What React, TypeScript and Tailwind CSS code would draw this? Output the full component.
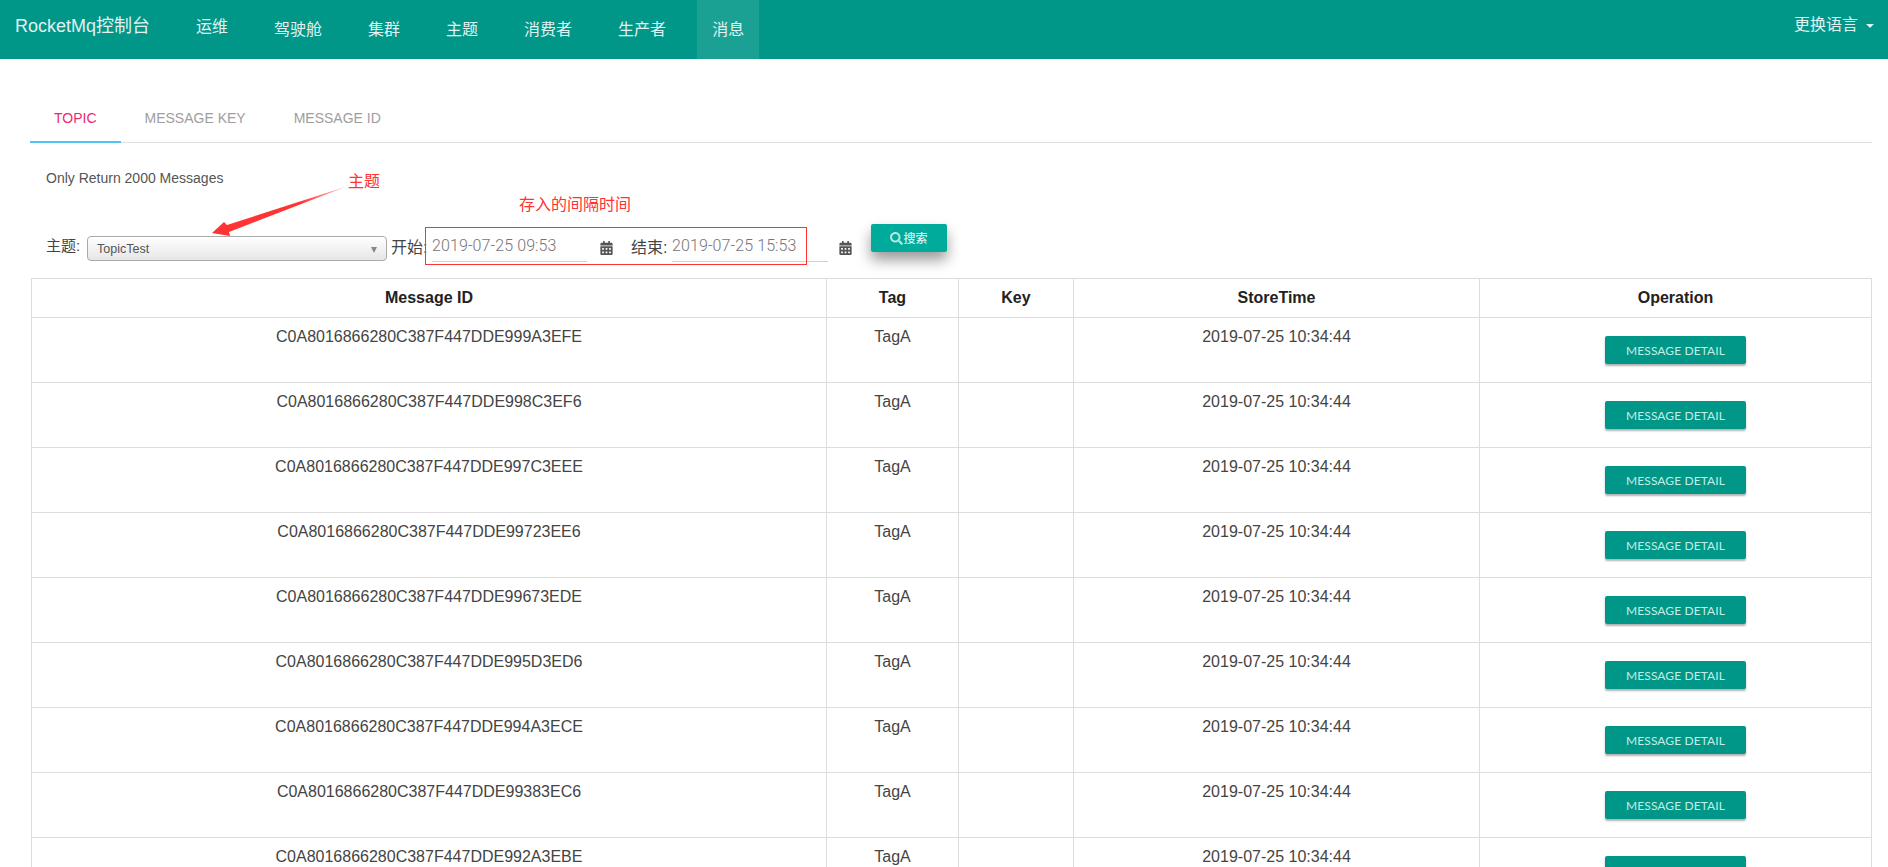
import { FaCalendarAlt, FaSearch } from "react-icons/fa";

const cjk = "font-['Liberation_Sans','Noto_Sans_CJK_SC',sans-serif]";

const navItems = ["驾驶舱", "集群", "主题", "消费者", "生产者"];

const rows = [
  "C0A8016866280C387F447DDE999A3EFE",
  "C0A8016866280C387F447DDE998C3EF6",
  "C0A8016866280C387F447DDE997C3EEE",
  "C0A8016866280C387F447DDE99723EE6",
  "C0A8016866280C387F447DDE99673EDE",
  "C0A8016866280C387F447DDE995D3ED6",
  "C0A8016866280C387F447DDE994A3ECE",
  "C0A8016866280C387F447DDE99383EC6",
  "C0A8016866280C387F447DDE992A3EBE",
];

function DateField({ value, width }: { value: string; width: string }) {
  return (
    <div className={`${width} mt-[2px] h-[36px] pt-[8px] border-b border-[#d0d0d0] font-['Roboto',sans-serif] font-light text-[16px] leading-[24px] text-[#757575] tracking-[0.1px] whitespace-nowrap`}>
      {value}
    </div>
  );
}

export default function App() {
  return (
    <div className={`relative h-screen overflow-hidden bg-white ${cjk}`}>
      {/* Top bar */}
      <nav className="flex h-[59px] bg-[#009688] text-[#e0f2f1]">
        <div className="pl-[15px] pr-[31px] pb-[6px] flex items-center text-[18px]">RocketMq控制台</div>
        <div className="flex gap-[16px]">
          <div className="px-[15px] pb-[6px] flex items-center text-[16px]">运维</div>
          {navItems.map((item) => (
            <div key={item} className="px-[15px] flex items-center text-[16px]">
              {item}
            </div>
          ))}
          <div className="px-[15px] flex items-center text-[16px] bg-white/10">消息</div>
        </div>
        <div className="ml-auto pr-[14px] pb-[10px] flex items-center text-[16px]">
          更换语言
          <span className="ml-[8px] mt-[2px] w-0 h-0 border-x-[4px] border-x-transparent border-t-[4px] border-t-[#e0f2f1]" />
        </div>
      </nav>

      {/* Tabs */}
      <div className="ml-[30px] mr-[16px] mt-[36px] flex h-[48px] border-b border-[#e0e0e0] text-[14px] font-['Liberation_Sans',sans-serif]">
        <div className="px-[24px] h-[48px] flex items-center justify-center border-b-2 border-[#4fc3f7] text-[#ec2a6e]">TOPIC</div>
        <div className="px-[24px] flex items-center justify-center text-[#9e9e9e]">MESSAGE KEY</div>
        <div className="px-[24px] flex items-center justify-center text-[#9e9e9e]">MESSAGE ID</div>
      </div>

      <div className="ml-[46px] mt-[25px] text-[14px] leading-[20px] text-[#555]">Only Return 2000 Messages</div>

      {/* Query form */}
      <div className="ml-[46px] mt-[36px] flex items-start h-[54px] text-[#444] whitespace-nowrap">
        <span className="mt-[11px] w-[41px] text-[15px] leading-[22px]">主题:</span>
        <div className="mt-[12px] w-[300px] h-[25px] pt-[2px] flex items-center justify-between pl-[9px] pr-[9px] rounded-[4px] border border-[#aaa] bg-gradient-to-b from-white to-[#e6e6e6] text-[12.5px] text-[#555]">
          TopicTest
          <span className="w-0 h-0 border-x-[3.5px] border-x-transparent border-t-[6px] border-t-[#888]" />
        </div>
        <span className="ml-[4px] mt-[12px] w-[41px] text-[16px] leading-[24px]">开始:</span>
        <DateField value="2019-07-25 09:53" width="w-[155px]" />
        <FaCalendarAlt className="ml-[13px] mt-[17px] text-[#555] w-[13px] h-[14px]" />
        <span className="ml-[18px] mt-[12px] w-[41px] text-[16px] leading-[24px]">结束:</span>
        <DateField value="2019-07-25 15:53" width="w-[156px]" />
        <FaCalendarAlt className="ml-[11px] mt-[17px] text-[#555] w-[13px] h-[14px]" />
        <button className="ml-[19px] w-[76px] h-[28px] pt-[1px] flex items-center justify-center rounded-[2px] bg-[#00ab9b] text-[12px] font-medium text-[#d5f2ee] shadow-[0_8px_14px_rgba(0,0,0,0.4)]">
          <FaSearch className="w-[13px] h-[13px] text-[#b2e5df]" />
          搜索
        </button>
      </div>

      {/* Message table */}
      <div className="ml-[31px] mr-[16px]">
        <table className="w-full table-fixed border-collapse text-center text-[16px] text-[#444]">
          <colgroup>
            <col className="w-[795px]" />
            <col className="w-[132px]" />
            <col className="w-[115px]" />
            <col className="w-[406px]" />
            <col />
          </colgroup>
          <thead>
            <tr className="h-[39px] font-bold text-[#222]">
              <th className="border border-[#ddd]">Message ID</th>
              <th className="border border-[#ddd]">Tag</th>
              <th className="border border-[#ddd]">Key</th>
              <th className="border border-[#ddd]">StoreTime</th>
              <th className="border border-[#ddd]">Operation</th>
            </tr>
          </thead>
          <tbody>
            {rows.map((id) => (
              <tr key={id} className="h-[65px]">
                <td className="border border-[#ddd] align-top pt-[9px] leading-[20px]">{id}</td>
                <td className="border border-[#ddd] align-top pt-[9px] leading-[20px]">TagA</td>
                <td className="border border-[#ddd]" />
                <td className="border border-[#ddd] align-top pt-[9px] leading-[20px]">2019-07-25 10:34:44</td>
                <td className="border border-[#ddd] align-top pt-[18px]">
                  <button className="mx-auto block w-[141px] h-[28px] pt-[1px] rounded-[2px] bg-[#009688] font-['Lato',sans-serif] text-[12px] tracking-[0.1px] text-[#c0efe6] shadow-[0_2px_2px_rgba(0,0,0,0.3)]">
                    MESSAGE DETAIL
                  </button>
                </td>
              </tr>
            ))}
          </tbody>
        </table>
      </div>

      {/* Screenshot annotations */}
      <span className="absolute left-[348px] top-[172px] text-[16px] leading-[20px] text-[#f33]">主题</span>
      <span className="absolute left-[519px] top-[195px] text-[16px] leading-[20px] text-[#f33]">存入的间隔时间</span>
      <div className="absolute left-[425px] top-[227px] w-[382px] h-[38px] border border-[#f33]" />
      <svg className="absolute left-[205px] top-[180px]" width="150" height="60" viewBox="205 180 150 60">
        <defs>
          <linearGradient id="arrowFade" x1="348" y1="186" x2="300" y2="204" gradientUnits="userSpaceOnUse">
            <stop offset="0" stopColor="#f33" stopOpacity="0.25" />
            <stop offset="1" stopColor="#f33" />
          </linearGradient>
        </defs>
        <path d="M348 186 L229 232 L230 236 L212 233 L224 222 L227 225 Z" fill="url(#arrowFade)" />
      </svg>
    </div>
  );
}
